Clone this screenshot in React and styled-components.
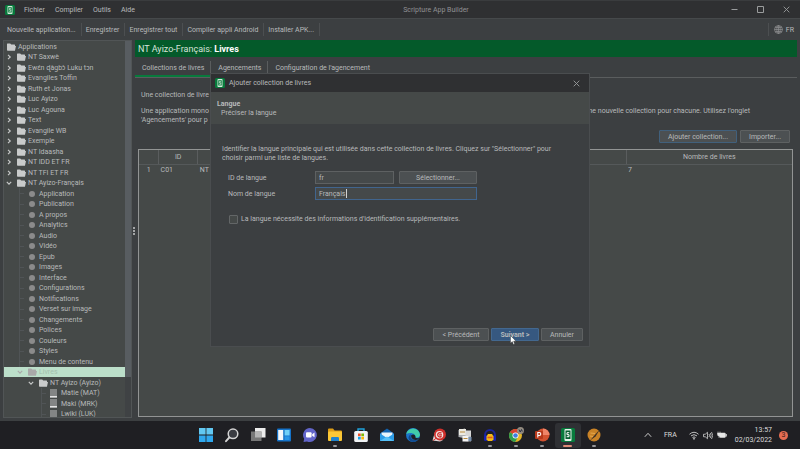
import React from "react";
import styled, { createGlobalStyle, css } from "styled-components";

const GlobalStyle = createGlobalStyle`
  * {
    box-sizing: border-box;
  }
  body {
    margin: 0;
    background: #3c3f41;
    color: #b8babb;
    font-family: Roboto, "Noto Sans", sans-serif;
    font-size: 7px;
    line-height: 10px;
  }
  button, input {
    font: inherit;
    color: inherit;
  }
  p, h1, h2, ul {
    margin: 0;
    padding: 0;
  }
  p {
    line-height: 9px;
  }
`;

const TREE = [
  { depth: 0, icon: "folder", text: "Applications" },
  { depth: 1, icon: "folder", text: "NT Saxwè", toggle: "closed" },
  { depth: 1, icon: "folder", text: "Ewɛ́n ɖàgbɔ̀ Luku tɔn", toggle: "closed" },
  { depth: 1, icon: "folder", text: "Evangiles Toffin", toggle: "closed" },
  { depth: 1, icon: "folder", text: "Ruth et Jonas", toggle: "closed" },
  { depth: 1, icon: "folder", text: "Luc Ayizo", toggle: "closed" },
  { depth: 1, icon: "folder", text: "Luc Agouna", toggle: "closed" },
  { depth: 1, icon: "folder", text: "Text", toggle: "closed" },
  { depth: 1, icon: "folder", text: "Evangile WB", toggle: "closed" },
  { depth: 1, icon: "folder", text: "Exemple", toggle: "closed" },
  { depth: 1, icon: "folder", text: "NT Idaasha", toggle: "closed" },
  { depth: 1, icon: "folder", text: "NT IDD ET FR", toggle: "closed" },
  { depth: 1, icon: "folder", text: "NT TFI ET FR", toggle: "closed" },
  { depth: 1, icon: "folder", text: "NT Ayizo-Français", toggle: "open" },
  ...[
    "Application",
    "Publication",
    "A propos",
    "Analytics",
    "Audio",
    "Vidéo",
    "Epub",
    "Images",
    "Interface",
    "Configurations",
    "Notifications",
    "Verset sur image",
    "Changements",
    "Polices",
    "Couleurs",
    "Styles",
    "Menu de contenu",
  ].map((text) => ({ depth: 2, icon: "dot", text })),
  { depth: 2, icon: "folder", text: "Livres", toggle: "open", selected: true },
  { depth: 3, icon: "folder", text: "NT Ayizo (Ayizo)", toggle: "open" },
  { depth: 4, icon: "book", text: "Matie (MAT)" },
  { depth: 4, icon: "book", text: "Maki (MRK)" },
  { depth: 4, icon: "book", text: "Lwiki (LUK)" },
];

function AppIcon({ size = 10 }) {
  return (
    <svg width={size} height={size} viewBox="0 0 20 20" aria-hidden="true">
      <rect width="20" height="20" rx="3" fill="#087a3c" />
      <rect x="5" y="2" width="10" height="16" rx="1.5" fill="#d5ecdd" />
      <rect x="6.5" y="4.5" width="7" height="10.5" fill="#087a3c" />
      <path
        d="M11.7 7H8.8v2.6h2.7v3H8.3"
        fill="none"
        stroke="#e6f4ea"
        strokeWidth="1.4"
      />
    </svg>
  );
}

function TreeIcon({ kind }) {
  if (kind === "dot") {
    return (
      <svg width="9" height="8" viewBox="0 0 9 8" aria-hidden="true">
        <circle cx="4" cy="4" r="3" fill="#8b8b8b" />
      </svg>
    );
  }
  if (kind === "book") {
    return (
      <svg width="9" height="9" viewBox="0 0 9 9" aria-hidden="true">
        <rect width="7" height="9" fill="#838585" />
        <rect y="7" width="7" height="1.4" fill="#e2e2e2" />
      </svg>
    );
  }
  return (
    <svg width="9" height="8" viewBox="0 0 9 8" aria-hidden="true">
      <path d="M0 1Q0 .5.5.5h2.700l1 1H7.500q.5 0 .5.5v5.500H.5Q0 7.500 0 7z" fill="currentColor" />
      <path d="M1 3h8L8 7.500H.5z" fill="currentColor" />
    </svg>
  );
}

function Chevron({ open }) {
  return (
    <svg width="6" height="6" viewBox="0 0 6 6" aria-hidden="true">
      <path
        d={open ? "M.8 1.8 3 4.2l2.2-2.4" : "M2 .8 4.3 3 2 5.2"}
        fill="none"
        stroke="currentColor"
        strokeWidth="1.1"
      />
    </svg>
  );
}

function Branch() {
  return (
    <svg width="9" height="11" viewBox="0 0 9 11" aria-hidden="true">
      <path d="M2.5 0v11M3 5.5h4" fill="none" stroke="#505456" />
    </svg>
  );
}

const TASK_ICONS = [
  {
    name: "Démarrer",
    art: (
      <>
        <path d="M1 1h6.6v6.6H1zM8.4 1H15v6.6H8.4z" fill="#62c8f2" />
        <path d="M1 8.4h6.6V15H1zM8.4 8.4H15V15H8.4z" fill="#2fa8ee" />
      </>
    ),
  },
  {
    name: "Rechercher",
    art: (
      <g fill="none" stroke="#d4d4d4" strokeLinecap="round">
        <circle cx="9" cy="6.8" r="4.8" fill="#3a3c42" strokeWidth="1.5" />
        <path d="M5.3 10.5 2 14.2" strokeWidth="1.9" />
      </g>
    ),
  },
  {
    name: "Vue des tâches",
    art: (
      <>
        <rect x="5" y="1" width="10.5" height="9.5" fill="#ececec" />
        <rect x="1" y="4.5" width="10.5" height="9.5" fill="#777" />
        <rect x="5" y="4.5" width="6.5" height="6" fill="#b4b4b4" />
      </>
    ),
  },
  {
    name: "Widgets",
    art: (
      <>
        <rect x="1" y="1.5" width="14" height="13" rx="1" fill="#1573c9" />
        <rect x="2.2" y="3" width="5" height="10" fill="#f4f8fb" />
        <rect x="8.6" y="3" width="5" height="5.5" fill="#6fd0f8" />
        <rect x="8.6" y="9.3" width="5" height="3.7" fill="#2795e6" />
      </>
    ),
  },
  {
    name: "Conversation",
    art: (
      <>
        <path d="M8 1a7 7 0 1 1-3 13.4L1.5 15l.7-3.2A7 7 0 0 1 8 1z" fill="#6265c9" />
        <rect x="4" y="5.3" width="5.6" height="5.2" rx="1" fill="#fff" />
        <path d="m10.2 7.2 2.3-1.6v4.7l-2.3-1.6z" fill="#fff" />
      </>
    ),
  },
  {
    name: "Explorateur",
    running: true,
    art: (
      <>
        <path d="M1 2.5Q1 1.5 2 1.5h4l1.6 2H14q1 0 1 1V9H1z" fill="#dd9d16" />
        <rect x="1" y="4.5" width="14" height="9.5" rx="1" fill="#fbc736" />
        <path d="M4 14v-2.8Q4 10 5.2 10h5.6q1.2 0 1.2 1.2V14z" fill="#1f83cf" />
      </>
    ),
  },
  {
    name: "Store",
    art: (
      <>
        <path d="M5 4.5V2h6v2.5" fill="none" stroke="#1fa3dc" strokeWidth="1.4" />
        <rect x="1.2" y="4" width="13.6" height="11" rx="1.5" fill="#f1f3f5" />
        <path d="M5 6.5h2.7v2.7H5z" fill="#f04e24" />
        <path d="M8.3 6.5H11v2.7H8.3z" fill="#7db904" />
        <path d="M5 9.8h2.7v2.7H5z" fill="#14a3eb" />
        <path d="M8.3 9.8H11v2.7H8.3z" fill="#fdb609" />
      </>
    ),
  },
  {
    name: "Courrier",
    art: (
      <>
        <path d="M1 6.5 8 1.5l7 5V14H1z" fill="#1263b0" />
        <path d="M2.5 5.5h11v3L8 11.5 2.5 8.5z" fill="#e7f4fc" />
        <path d="m1 6.5 7 4.5 7-4.5V14H1z" fill="#2c9ce6" />
        <path d="m1 14 7-4.5L15 14z" fill="#55c0f7" />
      </>
    ),
  },
  {
    name: "Edge",
    art: (
      <>
        <circle cx="8" cy="8" r="7" fill="#1b74c9" />
        <path d="M1.2 7A7 7 0 0 1 15 7.5c0 2.3-2 3.5-4.5 3.2 1-3.5-4-6.5-9.3-3.7z" fill="#41cbaa" />
        <path d="M5.5 9c0 3.2 3.5 5 7.5 3.4C10 16.6 3.6 15 3.5 11c0-1.6.8-3 2.6-3.8z" fill="#124b8f" />
        <path d="M6.2 8.3C8 6.5 11 8 10.3 10.6c1.5.8 3 .7 4.2-.1l-1.5 2c-3.8 1.500-7.400-.8-6.800-4.200z" fill="#202025" />
      </>
    ),
  },
  {
    name: "CCleaner",
    art: (
      <>
        <path d="M1.5 13.5 4 5l8 8-3 1.5z" fill="#e6dcdc" />
        <circle cx="9" cy="7.5" r="6" fill="#cf2f2b" />
        <circle cx="8.5" cy="7.8" r="3.8" fill="#f3e2e0" />
        <path d="M10.5 6.3a2.2 2.2 0 1 0 0 3M8 7.8h3" fill="none" stroke="#cf2f2b" strokeWidth="1.3" />
        <path d="M2 13.5 5.5 11" stroke="#cf2f2b" />
      </>
    ),
  },
  {
    name: "Numérisation",
    art: (
      <>
        <path d="M1.5 3 8 1.5V7l6 1v6.5L6.5 14v-3l-5-1z" fill="#aeb0b3" />
        <rect x="2" y="2" width="7" height="6" fill="#eceae2" />
        <rect x="8.5" y="3.5" width="5.5" height="6" fill="#d6d6d6" />
        <rect x="5.5" y="9" width="6" height="5.5" fill="#f3f3f3" />
        <path d="M3 5h5M6.5 11.5h4" stroke="#b98b3d" />
        <rect x="11.5" y="10" width="3" height="4" fill="#7890ad" />
      </>
    ),
  },
  {
    name: "Audacity",
    running: true,
    art: (
      <>
        <path d="M3 9.5V8a5 5 0 0 1 10 0v1.5" fill="none" stroke="#1b2596" strokeWidth="2" />
        <rect x="2" y="8" width="3.5" height="6" rx="1.5" fill="#1820b7" />
        <rect x="10.5" y="8" width="3.5" height="6" rx="1.5" fill="#1820b7" />
        <path d="M4.500 9.500 6 7h4l1.500 2.500v3L10 14H6l-1.500-1.500z" fill="#f6bb16" />
        <path d="M5.500 10.500h5" stroke="#e4571a" strokeWidth="1.600" />
      </>
    ),
  },
  {
    name: "Chrome",
    running: true,
    art: (
      <>
        <circle cx="7.5" cy="8.5" r="6.5" fill="#e2b52a" />
        <path d="M1.9 5.2A6.5 6.5 0 0 1 13 5.2L7.5 8.5z" fill="#d8412f" />
        <path d="M1.9 5.2A6.5 6.5 0 0 0 7.2 15l2.6-5-2.3-1.5z" fill="#2f9e4f" />
        <circle cx="7.5" cy="8.5" r="3" fill="#fff" />
        <circle cx="7.5" cy="8.5" r="2.3" fill="#3f7de0" />
        <circle cx="12.5" cy="3.5" r="3.5" fill="#938b80" />
        <path d="m11 2.5 1.2 2.5 1.3-2.5.8 2" fill="none" stroke="#2c3348" />
      </>
    ),
  },
  {
    name: "PowerPoint",
    running: true,
    art: (
      <>
        <circle cx="9" cy="8" r="6.5" fill="#d35230" />
        <path d="M9 1.5A6.5 6.5 0 0 1 15.5 8H9z" fill="#ef8467" />
        <rect x="1" y="4" width="8" height="8" rx="1" fill="#b7391b" />
        <path d="M3.8 10.5v-5h1.5a1.4 1.4 0 0 1 0 3H3.8" fill="none" stroke="#fff" strokeWidth="1.1" />
      </>
    ),
  },
  {
    name: "Scripture App Builder",
    running: true,
    active: true,
    art: (
      <>
        <rect x="1" y="1" width="14" height="14" rx="1.5" fill="#087a3c" />
        <rect x="4.5" y="2" width="7" height="12" rx="1" fill="#e6f1ea" />
        <rect x="5.5" y="3.5" width="5" height="8.5" fill="#07602f" />
        <path d="M9.3 5.7H7v2h2v2H6.7" fill="none" stroke="#fff" />
      </>
    ),
  },
  {
    name: "Paratext",
    running: true,
    art: (
      <>
        <circle cx="8" cy="8" r="6.5" fill="#c98226" />
        <path d="M4 13.5 14.5 1.5l-5 8z" fill="#3a2f27" />
        <path d="M4.5 6 9 6.5M4 9l3 .5" stroke="#e6a94f" />
      </>
    ),
  },
];

const Screen = styled.div`
  display: flex;
  flex-direction: column;
  min-height: 100vh;
`;

const Workspace = styled.div`
  position: relative;
  display: flex;
  flex: 1;
  flex-direction: column;
`;

const TitleBar = styled.header`
  display: flex;
  align-items: center;
  height: 19px;
  padding: 0 1px 0 5px;
  background: #2f3032;
  border-top: 1px solid #3a3c3e;
  border-bottom: 1px solid #46494b;
`;

const WindowTitle = styled.span`
  flex: 1;
  padding-left: 16px;
  text-align: center;
  color: #8f9192;
`;

const PlainButton = styled.button`
  display: flex;
  align-items: center;
  justify-content: center;
  gap: 3px;
  padding: 0;
  background: none;
  border: 0;
  white-space: nowrap;
`;

const MenuBar = styled.nav`
  display: flex;
  gap: 10px;
  padding-left: 9px;
`;

const WindowButton = styled(PlainButton)`
  width: 26px;
  height: 17px;
  color: #9a9c9d;
`;

const ToolBar = styled.div`
  display: flex;
  align-items: center;
  height: 21px;
  padding: 0 6px 0 3px;
`;

const ToolButton = styled(PlainButton)`
  height: 13px;
  padding: 0 5px 0 4px;
  border-right: 1px solid #4c4f51;
`;

const LanguageButton = styled(PlainButton)`
  height: 13px;
  margin-left: auto;
  padding-left: 5px;
  border-left: 1px solid #4c4f51;
`;

const Panes = styled.div`
  display: flex;
  flex: 1;
  padding: 0 3px;
`;

const TreePane = styled.aside`
  display: flex;
  width: 129px;
  height: 378px;
  overflow: hidden;
  background: #454948;
  border: 1px solid #515556;
`;

const TreeList = styled.ul`
  flex: 1;
  list-style: none;
`;

const TreeRow = styled.li`
  display: flex;
  align-items: center;
  gap: 2px;
  height: 10px;
  padding-left: ${(p) => (p.$depth === 0 ? 3 : p.$depth * 11 - 9)}px;
  white-space: nowrap;

  &:nth-child(odd) {
    height: 11px;
  }

  svg {
    flex: none;
    color: #c9cbcb;
  }

  ${(p) =>
    p.$selected &&
    css`
      background: #bcdfca;
      color: #a3c0ae;

      svg {
        color: #a9a9a9;
      }
    `}
`;

const ToggleSlot = styled.span`
  display: flex;
  width: 9px;
`;

const ScrollTrack = styled.div`
  width: 6px;
  background: #3f4244;
`;

const ScrollThumb = styled.div`
  height: 336px;
  background: #585d61;
`;

const Splitter = styled.div`
  display: flex;
  flex-direction: column;
  align-items: center;
  justify-content: center;
  gap: 1px;
  width: 3px;

  i {
    width: 2px;
    height: 2px;
    background: #a4a6a7;
  }
`;

const MainPane = styled.main`
  display: flex;
  flex: 1;
  flex-direction: column;
`;

const PageTitle = styled.h1`
  height: 17px;
  padding-left: 3px;
  background: #045a2a;
  color: #d7e4db;
  font-size: 9px;
  font-weight: 400;
  line-height: 18px;

  b {
    color: #fff;
  }
`;

const TabBar = styled.div`
  display: flex;
  height: 21px;
  padding-top: 4px;
  border-bottom: 1px solid #5a5d5e;
`;

const Tab = styled.button`
  padding: 0 6px 2px 7px;
  background: none;
  border: 0;
  border-right: ${(p) => (p.$last ? "0" : "1px solid #5a5d5e")};
  ${(p) => p.$active && "box-shadow: inset 0 -2px #087a3c;"}
`;

const Intro = styled.div`
  display: flex;
  flex-direction: column;
  gap: 7px;
  padding: 13px 47px 0 6px;
  white-space: nowrap;
`;

const SplitLine = styled.span`
  display: flex;
  justify-content: space-between;
`;

const Actions = styled.div`
  display: flex;
  justify-content: flex-end;
  gap: 3px;
  padding: 5px 7px 6px;
`;

const PushButton = styled.button`
  width: ${(p) => p.$width}px;
  height: 13px;
  padding: 0;
  background: ${(p) => (p.$primary ? "#365880" : "#4c5052")};
  border: 1px solid ${(p) => (p.$primary ? "#43688f" : p.$focus ? "#41607c" : "#5e6162")};
  border-radius: 1px;
  white-space: nowrap;
  ${(p) => p.$primary && "font-weight: 700;"}
`;

const TableFrame = styled.div`
  flex: 1;
  margin: 0 4px 4px 3px;
  background: #454948;
  border: 1px solid #929494;
`;

const Table = styled.table`
  width: 100%;
  table-layout: fixed;
  border-collapse: collapse;

  th {
    height: 14px;
    padding: 0;
    border-right: 1px solid #5a5d5e;
    border-bottom: 1px solid #55595a;
    font-weight: 400;
  }
  th:last-child {
    border-right: 0;
  }
  td {
    height: 12px;
    padding: 0 2px;
  }
  td:first-child {
    text-align: center;
  }
`;

const Overlay = styled.div`
  position: absolute;
  inset: 0;
  display: flex;
  align-items: center;
  justify-content: center;
  padding-bottom: 1px;
`;

const Dialog = styled.section`
  width: 380px;
  background: #3c3f41;
  border: 1px solid #4a4d4f;
`;

const DialogTitle = styled.div`
  display: flex;
  align-items: center;
  gap: 4px;
  height: 18px;
  padding-left: 4px;
  background: #2f3032;

  span {
    flex: 1;
  }
`;

const DialogHead = styled.div`
  height: 32px;
  padding: 7px 6px;
  background: #454948;

  h2 {
    font-size: 7px;
    line-height: 10px;
  }
  p {
    padding-left: 4px;
  }
`;

const DialogBody = styled.form`
  display: flex;
  flex-direction: column;
  height: 222px;
  padding: 21px 6px 5px 11px;
`;

const Fields = styled.div`
  display: grid;
  grid-template-columns: 87px 79px 83px;
  row-gap: 3px;
  align-items: center;
  padding: 8px 0 0 6px;

  button {
    margin-left: 5px;
  }
`;

const TextInput = styled.input`
  width: 79px;
  height: 13px;
  padding: 1px 3px 0;
  background-color: #45494a;
  border: 1px solid #5e6162;
  outline: 0;

  ${(p) =>
    p.$wide &&
    css`
      grid-column: span 2;
      width: 162px;
      border-color: #41658e;
      background-image: linear-gradient(#d0d2d3, #d0d2d3);
      background-position: 30px center;
      background-repeat: no-repeat;
      background-size: 1px 9px;
      caret-color: transparent;
    `}
`;

const CheckLine = styled.label`
  display: flex;
  align-items: center;
  gap: 3px;
  padding: 14px 0 0 7px;
`;

const CheckBox = styled.input`
  width: 9px;
  height: 9px;
  margin: 0;
  appearance: none;
  background: #454948;
  border: 1px solid #636667;
  border-radius: 1px;
`;

const DialogActions = styled.div`
  display: flex;
  justify-content: flex-end;
  gap: 2px;
  margin-top: auto;
`;

const CursorAnchor = styled.div`
  position: relative;
  display: flex;
`;

const Cursor = styled.svg`
  position: absolute;
  top: 7px;
  left: 19px;
`;

const TaskBar = styled.footer`
  display: grid;
  grid-template-columns: 1fr 413px 1fr;
  align-items: center;
  height: 28px;
  background: #1f1f23;
  color: #dcdcdc;
`;

const TaskIcons = styled.div`
  display: flex;
  grid-column: 2;
`;

const TaskButton = styled.button`
  display: flex;
  flex: 1;
  flex-direction: column;
  align-items: center;
  height: 25px;
  padding: 4px 0 0;
  background: ${(p) => (p.$active ? "#2f3034" : "none")};
  border: 0;
  border-radius: 3px;

  &::after {
    content: "";
    width: ${(p) => (p.$active ? 9 : 4)}px;
    height: 2px;
    margin-top: 2px;
    border-radius: 1px;
    background: ${(p) => (p.$active ? "#df8a77" : p.$running ? "#96969a" : "none")};
  }
`;

const Tray = styled.div`
  display: flex;
  align-items: center;
  justify-content: flex-end;
  gap: 4px;
  padding-right: 12px;
`;

const Language = styled.span`
  padding: 0 8px;
`;

const Clock = styled.time`
  padding: 0 3px 0 4px;
  text-align: right;
`;

const Badge = styled.span`
  width: 9px;
  height: 9px;
  border-radius: 50%;
  background: #e56d52;
  color: #35201c;
  text-align: center;
  line-height: 9px;
`;

function TaskGlyph({ children }) {
  return (
    <svg width="16" height="16" viewBox="0 0 16 16" aria-hidden="true">
      {children}
    </svg>
  );
}

function CloseGlyph() {
  return (
    <svg width="7" height="7" viewBox="0 0 7 7" aria-hidden="true">
      <path d="M.7.7l5.6 5.6M6.3.7.7 6.3" stroke="currentColor" strokeWidth=".9" />
    </svg>
  );
}

function LanguageDialog() {
  return (
    <Overlay>
      <Dialog role="dialog" aria-labelledby="dialog-title">
        <DialogTitle>
          <AppIcon />
          <span id="dialog-title">Ajouter collection de livres</span>
          <WindowButton aria-label="Fermer la boîte">
            <CloseGlyph />
          </WindowButton>
        </DialogTitle>
        <DialogHead>
          <h2>Langue</h2>
          <p>Préciser la langue</p>
        </DialogHead>
        <DialogBody onSubmit={(e) => e.preventDefault()}>
          <p>
            Identifier la langue principale qui est utilisée dans cette
            collection de livres. Cliquez sur "Sélectionner" pour
            <br />
            choisir parmi une liste de langues.
          </p>
          <Fields>
            <label htmlFor="lang-id">ID de langue</label>
            <TextInput id="lang-id" defaultValue="fr" />
            <PushButton type="button" $width={78}>
              Sélectionner...
            </PushButton>
            <label htmlFor="lang-name">Nom de langue</label>
            <TextInput id="lang-name" $wide defaultValue="Français" autoFocus />
          </Fields>
          <CheckLine>
            <CheckBox type="checkbox" />
            La langue nécessite des informations d'identification
            supplémentaires.
          </CheckLine>
          <DialogActions>
            <PushButton type="button" $width={56}>
              &lt; Précédent
            </PushButton>
            <CursorAnchor>
              <PushButton $primary $width={48}>
                Suivant &gt;
              </PushButton>
              <Cursor width="7" height="10" viewBox="0 0 7 10" aria-hidden="true">
                <path
                  d="M.5.5v7.700l1.800-1.600 1.100 2.900 1.300-.5-1.100-2.800H6z"
                  fill="#fff"
                  stroke="#26282a"
                  strokeWidth=".4"
                />
              </Cursor>
            </CursorAnchor>
            <PushButton type="button" $width={42}>
              Annuler
            </PushButton>
          </DialogActions>
        </DialogBody>
      </Dialog>
    </Overlay>
  );
}

export default function App() {
  return (
    <Screen>
      <GlobalStyle />
      <Workspace>
        <TitleBar>
          <AppIcon />
          <MenuBar>
            {["Fichier", "Compiler", "Outils", "Aide"].map((item) => (
              <PlainButton key={item}>{item}</PlainButton>
            ))}
          </MenuBar>
          <WindowTitle>Scripture App Builder</WindowTitle>
          <WindowButton aria-label="Réduire">
            <svg width="7" height="7" viewBox="0 0 7 7" aria-hidden="true">
              <path d="M.5 3.5h6" stroke="currentColor" />
            </svg>
          </WindowButton>
          <WindowButton aria-label="Agrandir">
            <svg width="7" height="7" viewBox="0 0 7 7" aria-hidden="true">
              <path d="M.5.5h6v6h-6z" fill="none" stroke="currentColor" />
            </svg>
          </WindowButton>
          <WindowButton aria-label="Fermer">
            <CloseGlyph />
          </WindowButton>
        </TitleBar>

        <ToolBar>
          <ToolButton>Nouvelle application...</ToolButton>
          <ToolButton>Enregistrer</ToolButton>
          <ToolButton>Enregistrer tout</ToolButton>
          <ToolButton>Compiler appli Android</ToolButton>
          <ToolButton>Installer APK...</ToolButton>
          <LanguageButton>
            <svg width="9" height="9" viewBox="0 0 18 18" fill="none" stroke="#8c8e8f" strokeWidth="1.5" aria-hidden="true">
              <circle cx="9" cy="9" r="8" />
              <ellipse cx="9" cy="9" rx="3.5" ry="8" />
              <path d="M9 1v16M1 9h16M2.5 5h13M2.5 13h13" />
            </svg>
            FR
          </LanguageButton>
        </ToolBar>

        <Panes>
          <TreePane>
            <TreeList>
              {TREE.map((row) => (
                <TreeRow key={row.text} $depth={row.depth} $selected={row.selected}>
                  {row.depth > 0 && (
                    <ToggleSlot>
                      {row.toggle ? <Chevron open={row.toggle === "open"} /> : <Branch />}
                    </ToggleSlot>
                  )}
                  <TreeIcon kind={row.icon} />
                  {row.text}
                </TreeRow>
              ))}
            </TreeList>
            <ScrollTrack>
              <ScrollThumb />
            </ScrollTrack>
          </TreePane>
          <Splitter>
            <i />
            <i />
            <i />
          </Splitter>
          <MainPane>
            <PageTitle>
              NT Ayizo-Français: <b>Livres</b>
            </PageTitle>
            <TabBar role="tablist">
              <Tab role="tab" aria-selected="true" $active>
                Collections de livres
              </Tab>
              <Tab role="tab">Agencements</Tab>
              <Tab role="tab" $last>
                Configuration de l'agencement
              </Tab>
            </TabBar>
            <Intro>
              <p>Une collection de livre</p>
              <p>
                <SplitLine>
                  <span>Une application mono</span>
                  <span>ne nouvelle collection pour chacune. Utilisez l'onglet</span>
                </SplitLine>
                'Agencements' pour p
              </p>
            </Intro>
            <Actions>
              <PushButton $focus $width={78}>
                Ajouter collection...
              </PushButton>
              <PushButton $width={50}>Importer...</PushButton>
            </Actions>
            <TableFrame>
              <Table>
                <colgroup>
                  <col width="3%" />
                  <col width="6%" />
                  <col />
                  <col width="166" />
                </colgroup>
                <thead>
                  <tr>
                    <th aria-label="Numéro" />
                    <th>ID</th>
                    <th aria-label="Nom" />
                    <th>Nombre de livres</th>
                  </tr>
                </thead>
                <tbody>
                  <tr>
                    <td>1</td>
                    <td>C01</td>
                    <td>NT</td>
                    <td>7</td>
                  </tr>
                </tbody>
              </Table>
            </TableFrame>
          </MainPane>
        </Panes>
        <LanguageDialog />
      </Workspace>

      <TaskBar>
        <TaskIcons>
          {TASK_ICONS.map((icon) => (
            <TaskButton
              key={icon.name}
              aria-label={icon.name}
              $running={icon.running}
              $active={icon.active}
            >
              <TaskGlyph>{icon.art}</TaskGlyph>
            </TaskButton>
          ))}
        </TaskIcons>
        <Tray>
          <svg width="8" height="6" viewBox="0 0 8 6" aria-hidden="true">
            <path d="m.8 4.8 3.2-3.5 3.2 3.5" fill="none" stroke="#c9c9c9" />
          </svg>
          <Language>FRA</Language>
          <svg width="10" height="9" viewBox="0 0 20 18" fill="none" stroke="#d0d0d0" strokeWidth="1.8" aria-hidden="true">
            <path d="M1 6.5q9-8 18 0M4 9.8q6-5 12 0M7 13q3-2.5 6 0" />
            <circle cx="10" cy="15.5" r="1.2" />
          </svg>
          <svg width="10" height="9" viewBox="0 0 20 18" fill="none" stroke="#d0d0d0" strokeWidth="1.6" aria-hidden="true">
            <path d="M1 6.5h3.5L9 2.5v13l-4.5-4H1zM12 6q2 3 0 6M14.5 4q3.5 5 0 10M17 2q5 7 0 14" />
          </svg>
          <svg width="10" height="8" viewBox="0 0 20 16" aria-hidden="true">
            <rect x="5" y="4" width="12" height="9" rx="2" fill="#e6e6e6" stroke="#e6e6e6" />
            <path d="M18.5 6v5" stroke="#e6e6e6" strokeWidth="2" />
            <path d="M2 1v3M6 1v3M1 4h6v3a3 3 0 0 1-6 0zM4 9v5" fill="#e6e6e6" stroke="#e6e6e6" />
          </svg>
          <Clock>
            13:57
            <br />
            02/03/2022
          </Clock>
          <Badge>3</Badge>
        </Tray>
      </TaskBar>
    </Screen>
  );
}
